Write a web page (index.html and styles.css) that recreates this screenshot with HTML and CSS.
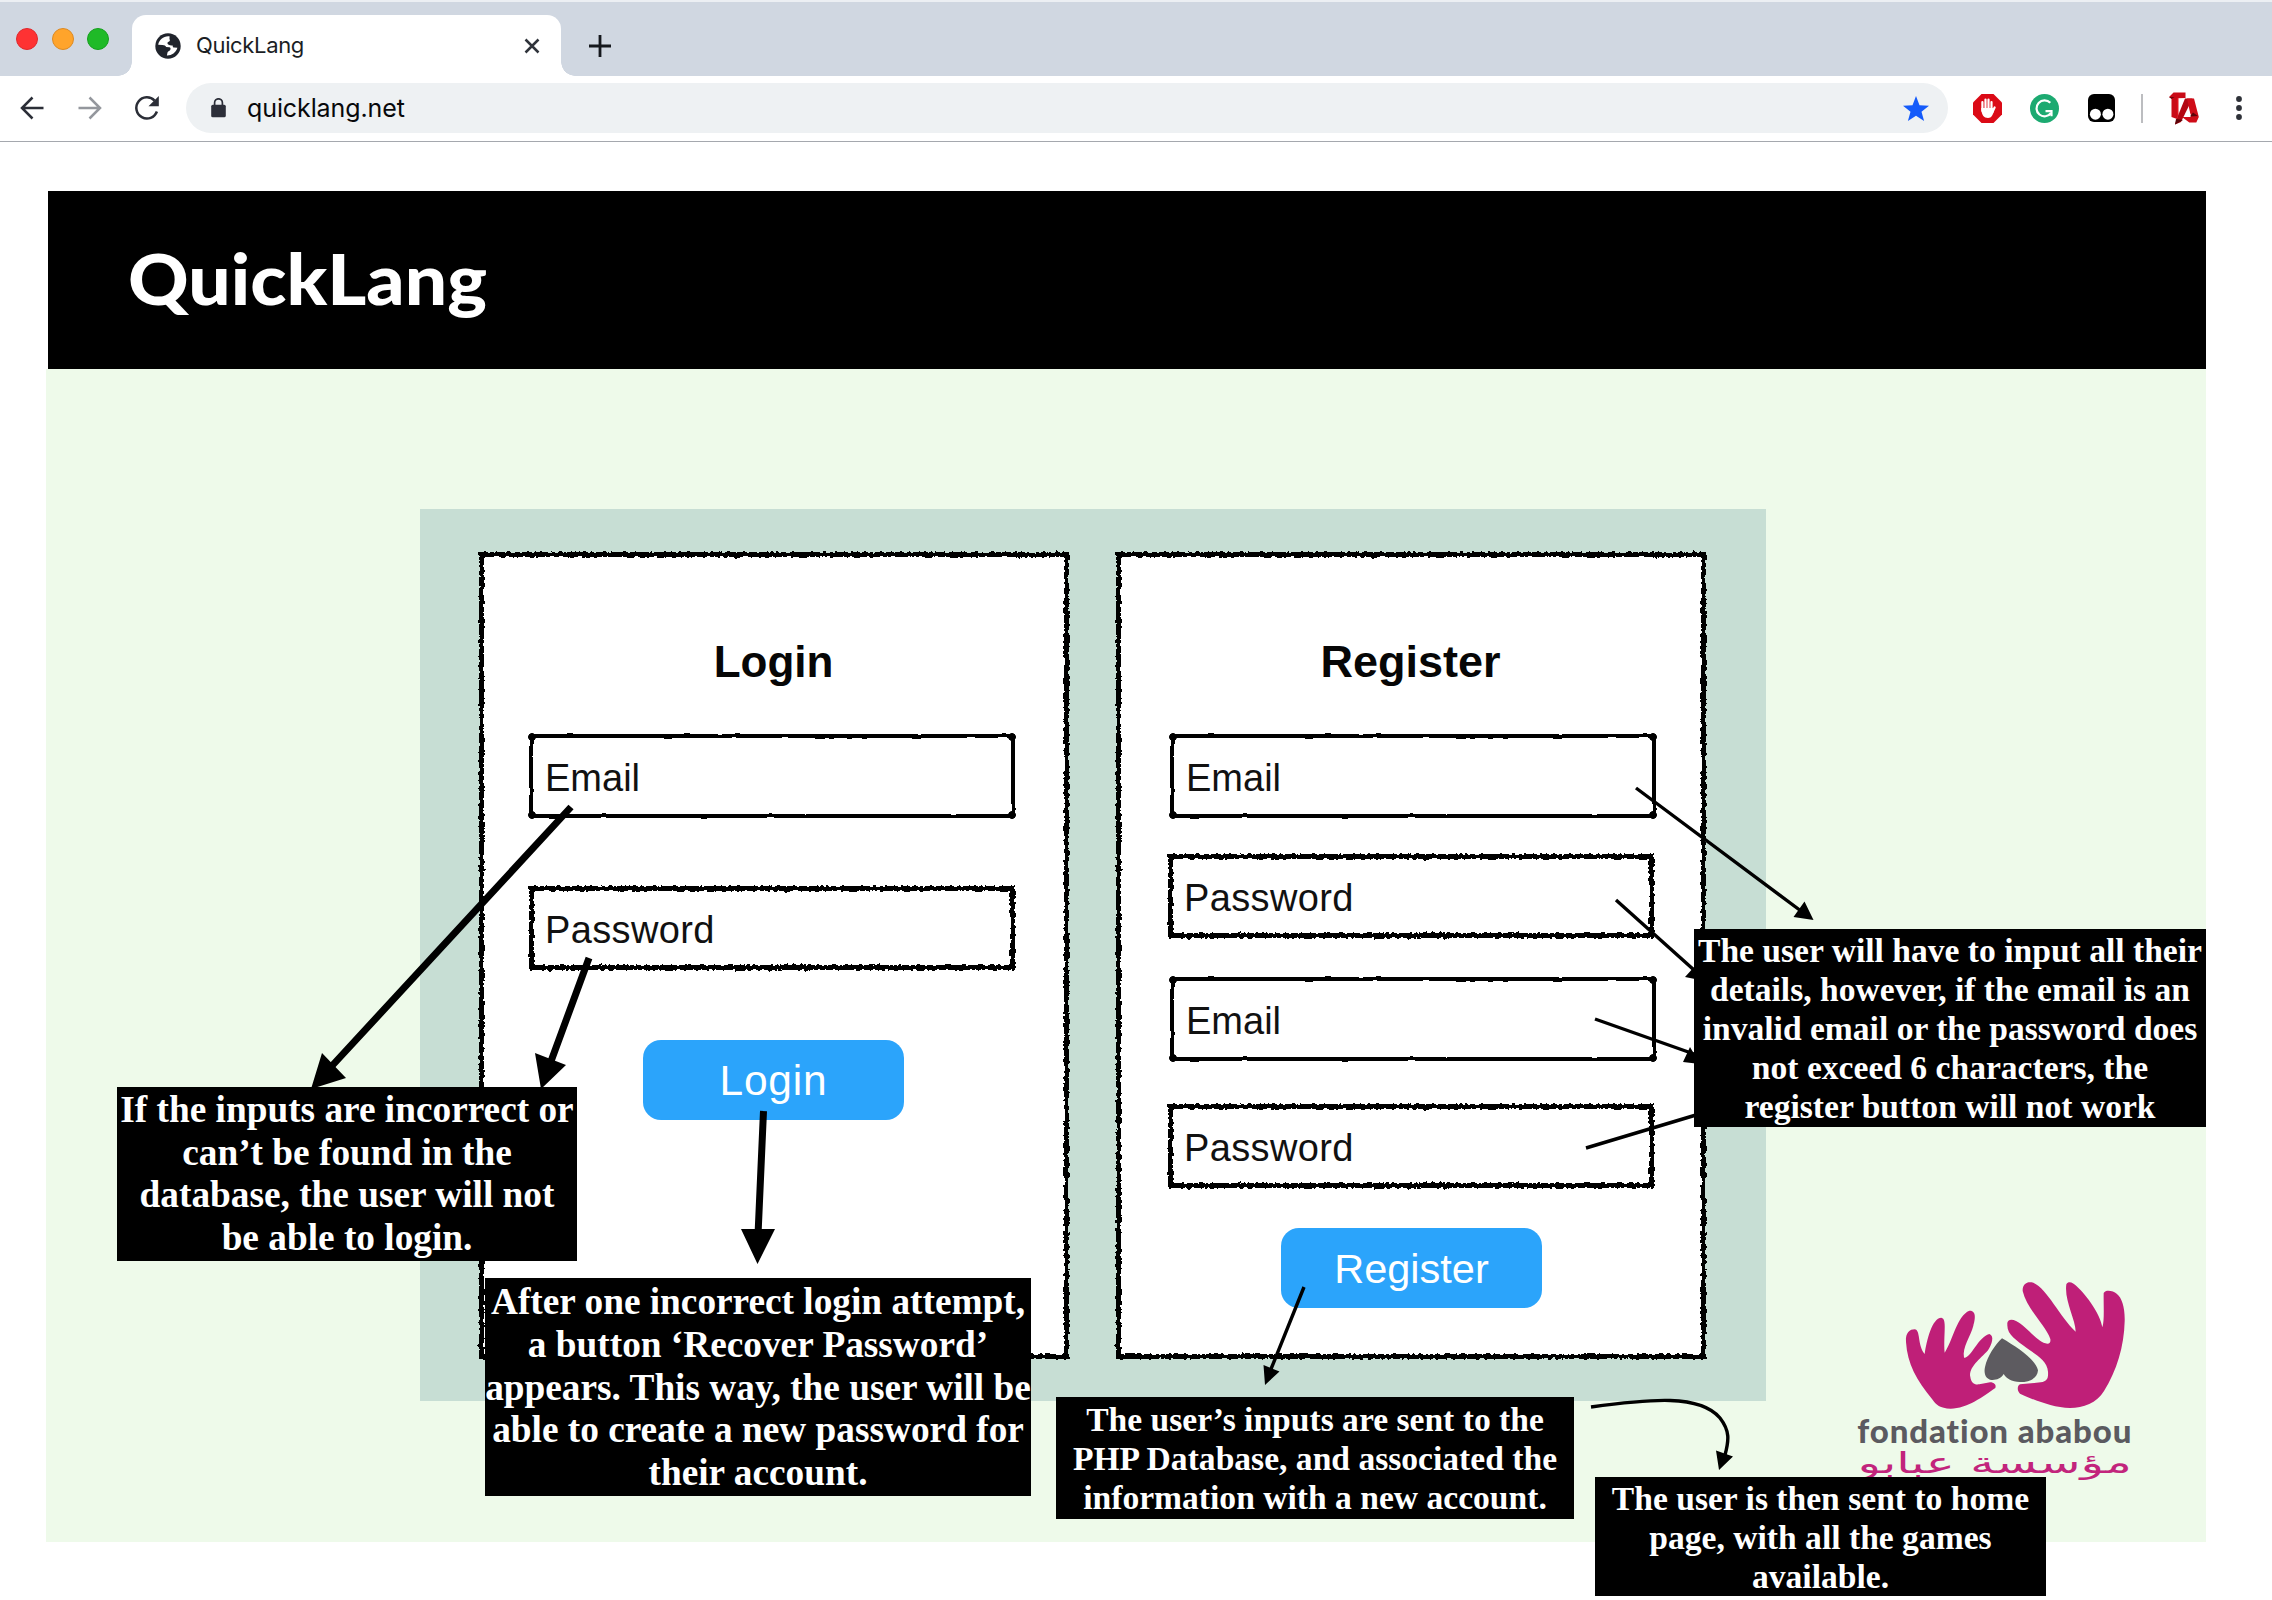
FILE: index.html
```html
<!DOCTYPE html>
<html lang="en">
<head>
<meta charset="utf-8">
<title>QuickLang</title>
<link rel="stylesheet" href="styles.css">
</head>
<body>
<svg class="defs" width="0" height="0" aria-hidden="true">
  <filter id="chalk" x="-2%" y="-5%" width="104%" height="110%">
    <feTurbulence type="fractalNoise" baseFrequency="0.25" numOctaves="2" seed="4" result="n"/>
    <feDisplacementMap in="SourceGraphic" in2="n" scale="5" xChannelSelector="R" yChannelSelector="G"/>
  </filter>
  <filter id="pen" x="-2%" y="-5%" width="104%" height="110%">
    <feTurbulence type="fractalNoise" baseFrequency="0.06" numOctaves="1" seed="9" result="n"/>
    <feDisplacementMap in="SourceGraphic" in2="n" scale="3" xChannelSelector="R" yChannelSelector="G"/>
  </filter>
</svg>

<div class="tabstrip">
  <div class="lights"><i class="red"></i><i class="amber"></i><i class="green"></i></div>
  <div class="tab">
    <svg class="globe" viewBox="0 0 26 26"><circle cx="13" cy="13" r="12.7" fill="#20242c"/><path d="M14.500 3.300C9 2.600 4 6.500 3.200 11.700l4.300.2c2 .1 3.200.8 3.700 2.200l3.100.2c1.200.1 1.700 1.500.9 2.600-.9 1.200-2.400 1.300-2.700 2.500l-.6 3c4.500.2 9-2.700 10.500-7.700l-3.200-.1c-1.200-.1-1.600-1-1.500-2.200-2.300.3-5.400-.2-5.300-2.300.1-1.500 2.300-1.300 2.500-2.600.1-1-.7-1.400-.4-2.300.1-.8.100-1.300 0-1.900z" fill="#fff"/></svg>
    <span class="tab-title">QuickLang</span>
    <svg class="close" viewBox="0 0 16 16"><path d="M1.500 1.500l13 13M14.500 1.500l-13 13" stroke="#30343b" stroke-width="2.500"/></svg>
  </div>
  <svg class="plus" viewBox="0 0 22 22"><path d="M11 0v22M0 11h22" stroke="#15181d" stroke-width="2.800"/></svg>
</div>

<div class="toolbar">
  <svg class="nav" viewBox="0 0 24 24"><path d="M23.500 12H2M12.500 1.500L2 12l10.500 10.500" fill="none" stroke="#2b2e37" stroke-width="2.500"/></svg>
  <svg class="nav fwd" viewBox="0 0 24 24"><path d="M.5 12H22M11.500 1.500L22 12 11.500 22.500" fill="none" stroke="#94979d" stroke-width="2.500"/></svg>
  <svg class="nav reload" viewBox="0 0 26 26"><path d="M20.600 5.600A10.600 10.600 0 1 0 22.900 16.500" fill="none" stroke="#2b2e37" stroke-width="2.500"/><path d="M24.800 1v10.300H14.500z" fill="#2b2e37"/></svg>
  <div class="omnibox">
    <svg class="lock" viewBox="0 0 15 20"><rect x=".2" y="6.700" width="14.600" height="12.600" rx="1.600" fill="#2c2f39"/><path d="M3.600 8V4.700a3.900 3.900 0 0 1 7.800 0V8" fill="none" stroke="#2c2f39" stroke-width="1.700"/></svg>
    <span class="url">quicklang.net</span>
    <svg class="star" viewBox="0 0 26 25"><path d="M13 0l3.500 9.300 9.500.5-7.500 6 2.600 9.200L13 19.700 4.900 25l2.600-9.200L0 9.800l9.500-.5z" fill="#155bfa"/></svg>
  </div>
  <svg class="ext e1" viewBox="0 0 29 29"><path d="M8.500 0h12L29 8.500v12L20.500 29h-12L0 20.500v-12z" fill="#db0a16"/><g stroke="#fff" stroke-width="2.200" stroke-linecap="round" fill="none"><path d="M9.400 8V17M12.500 5.500V15M15.500 5.500V15M18.500 8V16M21.600 13.500L19.500 18"/></g><path d="M8.300 14h11.400l1.400 2c-1 4.500-2.500 8-6.100 8-4 0-6.700-3-6.700-10z" fill="#fff"/></svg>
  <svg class="ext e2" viewBox="0 0 29 29"><circle cx="14.500" cy="14.500" r="14.500" fill="#1caa71"/><path d="M20.300 8.800A8 8 0 1 0 21 19" fill="none" stroke="#fff" stroke-width="2.200"/><path d="M15.500 17.200h6v5" fill="none" stroke="#fff" stroke-width="2.200"/></svg>
  <svg class="ext e3" viewBox="0 0 27 28"><rect width="27" height="28" rx="6" fill="#000"/><circle cx="7.400" cy="20.200" r="5.500" fill="#fff"/><circle cx="19.900" cy="20.200" r="5.500" fill="#fff"/></svg>
  <i class="sep"></i>
  <svg class="ext e4" viewBox="0 0 30 33"><path d="M0 5L4.500.5h12V6L8 6.200V27L2.500 25V6.300z" fill="#c90b17"/><path d="M8 6h1.500v17L8 27z" fill="#e0101c"/><path d="M16 6.500h7.500L12 30l-6 2.500L8 26z" fill="#b30712"/><path d="M18 6.500h7L29.800 25l-2.500 5.500h-7L13 25h9z" fill="#cf0c18"/><path d="M19.500 18L22 23.500h-5z" fill="#fff"/><path d="M7 27l7 1-8 4.500zM21 24.500l8-.5-5-3.500z" fill="#5c0409"/><path d="M0 5h5.500L2.500 7z" fill="#6d050b"/></svg>
  <svg class="dots" viewBox="0 0 6 24"><circle cx="3" cy="3" r="2.900"/><circle cx="3" cy="12" r="2.900"/><circle cx="3" cy="21" r="2.900"/></svg>
</div>

<div class="page">
  <header class="banner"><h1>QuickLang</h1></header>
  <main class="stage">
    <section class="panel">
      <form class="card login">
        <h2>Login</h2>
        <div class="field pen">Email</div>
        <div class="field chalk f2">Password</div>
        <div class="btn">Login</div>
      </form>
      <form class="card register">
        <h2>Register</h2>
        <div class="field pen">Email</div>
        <div class="field chalk f2">Password</div>
        <div class="field pen f3">Email</div>
        <div class="field chalk f4">Password</div>
        <div class="btn">Register</div>
      </form>
    </section>
    <svg class="logo" viewBox="150 80 860 620">
      <g fill="#bf1f78">
        <path d="M318 275C316 246 330 237 344 237C362 238 352 285 374 311C380 270 396 203 424 202C442 206 430 250 434 307C458 270 472 195 508 181C532 180 524 212 520 226C512 258 486 290 492 322C512 326 532 262 568 251C584 256 576 282 564 300C540 326 505 352 511 380C514 400 524 404 538 402L570 396C582 396 590 404 586 413C550 438 502 475 452 475C420 474 408 464 396 446C350 390 322 340 318 275Z"/>
        <path d="M622 222C620 208 634 204 648 212C680 228 712 276 742 280C750 280 752 274 751 266C736 224 680 176 668 122C667 100 682 92 700 97C742 116 780 200 827 244C826 206 792 150 799 102C806 90 820 98 830 108C862 138 900 190 907 231C914 210 910 160 911 128C918 116 940 122 950 130C966 142 975 172 974 212C972 290 950 360 912 422C890 458 850 473 810 473C756 472 700 448 660 430C652 422 650 408 660 402L722 396C742 392 745 384 744 364C742 330 706 312 680 293C650 270 620 254 622 222Z"/>
      </g>
      <path d="M606 264C650 290 706 326 714 360C712 384 690 395 660 395C634 394 618 384 611 371C602 386 584 391 570 388C556 384 551 368 555 350C562 318 586 282 606 264Z" fill="#5d5b60"/>
      <text class="logo-latin" x="172" y="578" textLength="822" lengthAdjust="spacing">fondation ababou</text>
      <text class="logo-arabic" transform="translate(584 668) scale(1.46 .86)" text-anchor="middle">مؤسسة عبابو</text>
    </svg>
  </main>
</div>

<div class="notes">
  <svg class="arrows" viewBox="0 0 2272 1600">
    <g fill="none" stroke="#000">
      <path d="M571 807L330 1068M589 958L550 1064M763.500 1111L758 1235" stroke-width="7"/>
      <path d="M1636 788L1801 911M1616 900L1694 970M1595 1019L1694 1054M1586 1148L1696 1115M1304 1287L1271 1369M1591 1407C1650 1399 1700 1394 1720 1418C1730 1431 1729 1440 1725 1455" stroke-width="3.400"/>
    </g>
    <path d="M311 1089l11-36 24 25zM541 1089l-6-36 31 12zM757.500 1264l-16.500-35h34zM1813.500 920l-20-3 11-15.500zM1700 980l-15-3 10-11zM1700 1064l-17-2 7-15zM1265 1385l-1.500-20 16 6.500zM1719 1470l-3-19.500 17 6z"/>
  </svg>
  <p class="note n1">If the inputs are incorrect or<br>can’t be found in the<br>database, the user will not<br>be able to login.</p>
  <p class="note n2">After one incorrect login attempt,<br>a button ‘Recover Password’<br>appears. This way, the user will be<br>able to create a new password for<br>their account.</p>
  <p class="note n3">The user will have to input all their<br>details, however, if the email is an<br>invalid email or the password does<br>not exceed 6 characters, the<br>register button will not work</p>
  <p class="note n4">The user’s inputs are sent to the<br>PHP Database, and associated the<br>information with a new account.</p>
  <p class="note n5">The user is then sent to home<br>page, with all the games<br>available.</p>
</div>
</body>
</html>
```
FILE: styles.css
```css
* { box-sizing: border-box; margin: 0; padding: 0; }
body {
  position: relative;
  width: 2272px;
  height: 1600px;
  overflow: hidden;
  background: #fff;
  font-family: "Liberation Sans", Arial, sans-serif;
}
svg { display: block; flex: none; }
.defs { position: absolute; }

/* browser chrome */
.tabstrip {
  display: flex;
  height: 76px;
  background: #d0d7e1;
  border-top: 2px solid #eceff3;
}
.lights { display: flex; gap: 13.500px; width: 132px; padding: 26px 0 0 16px; }
.lights i { width: 22px; height: 22px; border-radius: 50%; border: 1px solid; }
.lights .red { background: #fe3233; border-color: #e0282c; }
.lights .amber { background: #ffa42b; border-color: #dd8a22; }
.lights .green { background: #1fba27; border-color: #15a01d; }
.tab {
  position: relative;
  display: flex;
  align-items: center;
  width: 429px;
  margin-top: 13px;
  padding: 0 21px 0 23px;
  background: #fff;
  border-radius: 14px 14px 0 0;
}
.tab::before, .tab::after {
  content: "";
  position: absolute;
  bottom: 0;
  width: 14px;
  height: 14px;
}
.tab::before { left: -14px; background: radial-gradient(circle at 0 0, transparent 13.500px, #fff 14px); }
.tab::after { right: -14px; background: radial-gradient(circle at 100% 0, transparent 13.500px, #fff 14px); }
.globe { width: 26px; height: 26px; }
.tab-title { flex: 1; margin-left: 15px; padding-bottom: 2px; font: 22px Inter, sans-serif; letter-spacing: -.35px; color: #1b1e24; }
.close { width: 16px; height: 16px; }
.plus { width: 22px; height: 22px; margin: 33px 0 0 28px; }
.toolbar {
  display: flex;
  align-items: center;
  height: 66px;
  padding: 0 24px 1px 20px;
  border-bottom: 1.500px solid #a5a8ae;
}
.nav { width: 24px; height: 24px; }
.fwd { margin-left: 34px; }
.reload { width: 26px; height: 26px; margin-left: 32px; }
.omnibox {
  display: flex;
  align-items: center;
  width: 1762px;
  height: 50px;
  margin-left: 26px;
  padding: 0 19px 0 25px;
  border-radius: 25px;
  background: #eef1f3;
}
.lock { width: 15px; height: 20px; }
.url { flex: 1; margin-left: 21px; font: 25px Inter, sans-serif; letter-spacing: -.1px; color: #08090b; }
.star { width: 26px; height: 25px; }
.ext { width: 29px; height: 29px; }
.e1 { margin-left: 25px; }
.e2 { margin-left: 28px; }
.e3 { width: 27px; height: 28px; margin-left: 29px; }
.sep { width: 2px; height: 29px; margin-left: 26px; background: #bcbdc0; }
.e4 { width: 30px; height: 33px; margin-left: 26px; }
.dots { width: 6px; height: 24px; margin-left: 37px; fill: #2e3138; }

/* page */
.page { padding: 49px 66px 0 46px; }
.banner {
  display: flex;
  align-items: center;
  height: 178px;
  margin-left: 2px;
  padding: 0 0 5px 80px;
  background: #000;
}
h1 { font: 900 70.500px Lato, sans-serif; color: #fff; transform: scaleX(1.062); transform-origin: 0 50%; }
.stage {
  display: flex;
  align-items: flex-start;
  height: 1173px;
  padding: 140px 0 0 374px;
  background: #eefaea;
}
.panel {
  display: flex;
  flex: none;
  gap: 47px;
  width: 1346px;
  height: 892px;
  padding: 43px 59px;
  background: #c7ded4;
}
.card {
  position: relative;
  width: 590px;
  height: 807px;
  padding: 85px 51px 0 50px;
  background: linear-gradient(#fff, #fff) center / 584px 801px no-repeat;
}
.register { padding-left: 54px; padding-right: 46px; }
.card::before, .field::before {
  content: "";
  position: absolute;
  inset: 0;
  border: 5px solid #000;
  filter: url(#chalk);
}
h2 { font-size: 44px; line-height: 50px; margin-bottom: 47px; text-align: center; color: #060606; }
.register h2 { margin-right: 9px; font-size: 45px; }
.field {
  position: relative;
  width: 486px;
  height: 84px;
  padding-left: 16px;
  font-size: 38px;
  line-height: 88px;
  letter-spacing: .35px;
  color: #111;
}
.pen { letter-spacing: 0; }
.pen::before { border-width: 4px; filter: url(#pen); border-radius: 2px; }
/* ink blots where the pen strokes meet */
.pen::after {
  content: "";
  position: absolute;
  inset: -1px;
  background:
    radial-gradient(circle at 4px 4px, #000 3.500px, transparent 4.300px),
    radial-gradient(circle at calc(100% - 4px) 4px, #000 3.500px, transparent 4.300px),
    radial-gradient(circle at 4px calc(100% - 4px), #000 3.500px, transparent 4.300px),
    radial-gradient(circle at calc(100% - 4px) calc(100% - 4px), #000 3.500px, transparent 4.300px);
}
.login .f2 { margin-top: 68px; }
.register .f2 { margin: 36px 0 0 -2px; }
.f3 { margin-top: 39px; }
.f4 { margin: 43px 0 0 -2px; }
.btn {
  width: 261px;
  height: 80px;
  margin: 70px 0 0 114px;
  border-radius: 18px;
  background: #2ba4fb;
  color: #fff;
  font-size: 41.500px;
  line-height: 82px;
  text-align: center;
}
.login .btn { font-size: 42.500px; letter-spacing: .8px; }
.register .btn { margin: 40px 0 0 111px; line-height: 81px; }
.logo { width: 286.700px; height: 206.700px; margin: 768px 0 0 84px; overflow: visible; }
.logo-latin { font: 900 99px Lato, sans-serif; font-variant-ligatures: none; fill: #5b5a60; }
.logo-arabic { font: 100px "DejaVu Sans", sans-serif; fill: #c2247c; }

/* annotations laid over the mock-up */
.notes, .arrows { position: absolute; inset: 0; }
.note {
  position: absolute;
  padding-top: 2px;
  background: #000;
  color: #fff;
  font: bold 33.600px/39px "Liberation Serif", "Times New Roman", serif;
  text-align: center;
  white-space: nowrap;
}
.n1 { left: 117px; top: 1087px; width: 460px; height: 174px; font-size: 37.300px; line-height: 42.600px; }
.n2 { left: 485px; top: 1278px; width: 546px; height: 218px; padding-top: 3px; font-size: 37.300px; line-height: 42.800px; }
.n3 { left: 1694px; top: 929px; width: 512px; height: 198px; }
.n4 { left: 1056px; top: 1397px; width: 518px; height: 122px; padding-top: 3px; line-height: 39.200px; }
.n5 { left: 1595px; top: 1477px; width: 451px; height: 119px; }
```
